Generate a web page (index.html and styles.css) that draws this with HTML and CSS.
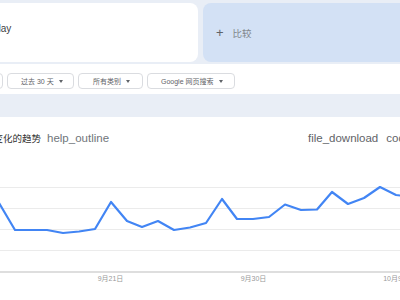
FILE: index.html
```html
<!DOCTYPE html>
<html>
<head>
    <title>Google Trends</title>
    <link rel="stylesheet" href="styles.css">
</head>
<body>
    <div class="page">
        <div class="top-row">
            <div class="term-card">Holiday</div>
            <div class="compare-card">
                <span class="plus">+</span>
                <span class="compare-label">比较</span>
            </div>
        </div>

        <div class="filter-bar">
            <div class="chip chip-geo">美国<span class="caret"></span></div>
            <div class="chip chip-time">过去 30 天<span class="caret"></span></div>
            <div class="chip chip-cat">所有类别<span class="caret"></span></div>
            <div class="chip chip-type">Google 网页搜索<span class="caret"></span></div>
        </div>

        <div class="chart-card">
            <div class="chart-header">
                <span class="chart-title">随时间变化的趋势</span>
                <span class="icon-text help">help_outline</span>
                <div class="actions">
                    <span class="icon-text">file_download</span>
                    <span class="icon-text">code</span>
                    <span class="icon-text">share</span>
                </div>
            </div>
            <svg class="chart" width="460" height="120" viewBox="-60 180 460 120">
                <g class="grid">
                    <line x1="-60" y1="187.5" x2="400" y2="187.5"></line>
                    <line x1="-60" y1="208.5" x2="400" y2="208.5"></line>
                    <line x1="-60" y1="229.5" x2="400" y2="229.5"></line>
                    <line x1="-60" y1="250.5" x2="400" y2="250.5"></line>
                </g>
                <rect class="baseline" x="-60" y="271" width="460" height="2"></rect>
                <polyline class="trend" points="-17,199 -1,203 15,230 31,230 47,230 63,233 79,231.5 95,229 111,202 127,221 142,227 158,221 174,230 190,227.5 206,223 222,199 237,219 253,219 269,217 285,204.5 301,210 317,209.5 332,192 348,204 364,198 380,187 396,195 412,197"></polyline>
                <g class="axis-labels">
                    <text x="110.5" y="281">9月21日</text>
                    <text x="253.5" y="281">9月30日</text>
                    <text x="396" y="281">10月9日</text>
                </g>
            </svg>
        </div>
    </div>
</body>
</html>
```

FILE: styles.css
```css
body {
    margin: 0;
    background-color: #e9eef6;
    font-family: "Liberation Sans", "Noto Sans CJK SC", sans-serif;
    overflow: hidden;
}
.page {
    margin-left: -60px;
    width: 560px;
    padding-top: 3px;
}
.top-row {
    display: flex;
    gap: 5px;
    height: 59px;
}
.term-card {
    width: 258px;
    box-sizing: border-box;
    padding-left: 38px;
    padding-bottom: 8px;
    display: flex;
    align-items: center;
    background-color: #fff;
    border-radius: 8px;
    font-size: 10px;
    color: #3c4043;
}
.compare-card {
    flex: 1;
    display: flex;
    align-items: center;
    gap: 9px;
    padding-left: 13px;
    background-color: #d3e1f5;
    border-radius: 8px;
}
.plus {
    font-size: 13px;
    color: #5f6368;
}
.compare-label {
    font-size: 9.5px;
    color: #80868b;
}
.filter-bar {
    margin-top: 2px;
    height: 30px;
    box-sizing: border-box;
    padding: 9px 0 0 10px;
    display: flex;
    align-items: flex-start;
    gap: 4px;
    background-color: #fff;
}
.chip {
    height: 16px;
    box-sizing: border-box;
    display: flex;
    align-items: center;
    gap: 5px;
    padding-left: 13px;
    border: 1px solid #dadce0;
    border-radius: 4px;
    font-size: 7px;
    color: #5f6368;
    white-space: nowrap;
}
.chip-geo { width: 53px; }
.chip-time { width: 67px; }
.chip-cat { width: 65px; padding-left: 14px; }
.chip-type { width: 88px; }
.caret {
    width: 0;
    height: 0;
    border-left: 2.5px solid transparent;
    border-right: 2.5px solid transparent;
    border-top: 3px solid #5f6368;
}
.chart-card {
    margin-top: 23px;
    height: 200px;
    background-color: #fff;
}
.chart-header {
    height: 42px;
    display: flex;
    align-items: center;
    padding: 0 52px 0 25px;
}
.chart-title {
    font-size: 9.5px;
    color: #333;
}
.icon-text {
    font-size: 11.5px;
    color: #5f6368;
}
.help {
    margin-left: 6px;
    color: #70757a;
}
.actions {
    margin-left: auto;
    display: flex;
    gap: 8px;
}
.chart {
    display: block;
    margin-top: 21px;
}
.grid line {
    stroke: #ebebeb;
    stroke-width: 1;
}
.baseline {
    fill: #dedede;
}
.trend {
    fill: none;
    stroke: #4285f4;
    stroke-width: 2.2;
    stroke-linejoin: round;
}
.axis-labels text {
    font-size: 7px;
    fill: #999;
    text-anchor: middle;
    font-family: "Liberation Sans", "Noto Sans CJK SC", sans-serif;
}
```
